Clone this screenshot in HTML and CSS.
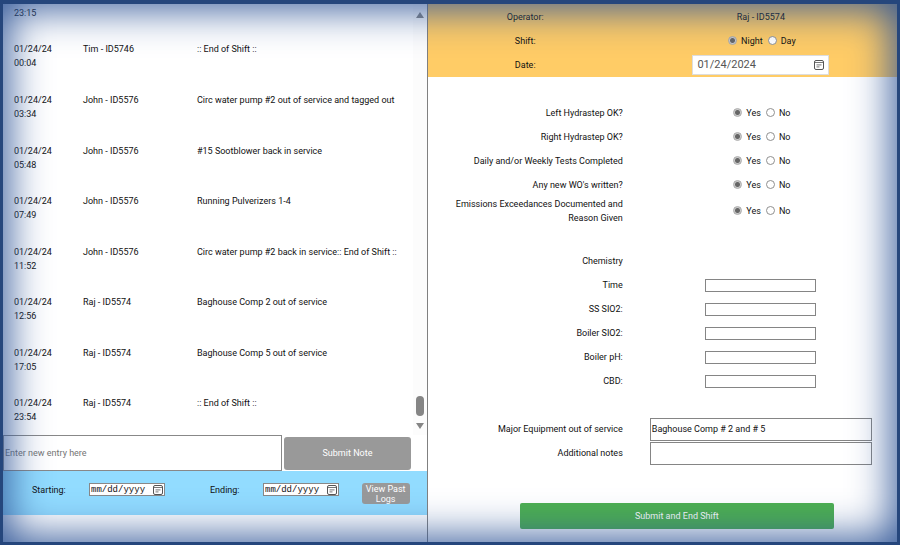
FILE: index.html
```html
<!DOCTYPE html>
<html lang="en">
<head>
<meta charset="utf-8">
<meta name="viewport" content="width=device-width, initial-scale=1">
<title>Shift Log</title>
<link rel="stylesheet" href="styles.css">
</head>
<body>
<main class="frame">
  <section class="log-panel" aria-label="Shift log">
    <div class="log">
      <table class="log-table">
        <tbody>
          <tr class="row-cut row-first"><td class="when">23:15</td><td class="who"></td><td></td></tr>
          <tr><td class="when">01/24/24<br>00:04</td><td class="who">Tim - ID5746</td><td>:: End of Shift ::</td></tr>
          <tr><td class="when">01/24/24<br>03:34</td><td class="who">John - ID5576</td><td>Circ water pump #2 out of service and tagged out</td></tr>
          <tr><td class="when">01/24/24<br>05:48</td><td class="who">John - ID5576</td><td>#15 Sootblower back in service</td></tr>
          <tr><td class="when">01/24/24<br>07:49</td><td class="who">John - ID5576</td><td>Running Pulverizers 1-4</td></tr>
          <tr><td class="when">01/24/24<br>11:52</td><td class="who">John - ID5576</td><td>Circ water pump #2 back in service:: End of Shift ::</td></tr>
          <tr><td class="when">01/24/24<br>12:56</td><td class="who">Raj - ID5574</td><td>Baghouse Comp 2 out of service</td></tr>
          <tr><td class="when">01/24/24<br>17:05</td><td class="who">Raj - ID5574</td><td>Baghouse Comp 5 out of service</td></tr>
          <tr class="row-cut"><td class="when">01/24/24<br>23:54</td><td class="who">Raj - ID5574</td><td>:: End of Shift ::</td></tr>
        </tbody>
      </table>
      <div class="scrollbar" aria-hidden="true">
        <svg class="arrow" viewBox="0 0 10 8"><path d="M5 1 9 7H1Z"/></svg>
        <span class="thumb"></span>
        <svg class="arrow" viewBox="0 0 10 8"><path d="M5 7 1 1H9Z"/></svg>
      </div>
    </div>
    <form class="entry">
      <input class="entry-text" type="text" placeholder="Enter new entry here" aria-label="Enter new entry here">
      <button class="btn-grey btn-note" type="button">Submit Note</button>
    </form>
    <form class="past">
      <label class="past-label" for="starting">Starting:</label>
      <input class="past-date" type="date" id="starting">
      <label class="past-label" for="ending">Ending:</label>
      <input class="past-date" type="date" id="ending">
      <button class="btn-grey btn-past" type="button">View Past Logs</button>
    </form>
    <div class="log-foot"></div>
  </section>

  <form class="shift-panel">
    <div class="shift-head">
      <div class="row row-head"><span>Operator:</span><span class="value">Raj - ID5574</span></div>
      <div class="row row-head"><span>Shift:</span>
        <div class="radios">
          <input type="radio" name="shift" id="night" checked><label for="night">Night</label>
          <input type="radio" name="shift" id="day"><label for="day">Day</label>
        </div>
      </div>
      <div class="row row-head"><label for="date">Date:</label><div class="value"><input class="shift-date" type="date" id="date" value="2024-01-24"></div></div>
    </div>

    <div class="group">
      <div class="row"><span>Left Hydrastep OK?</span>
        <div class="radios"><input type="radio" name="left" id="left-y" checked><label for="left-y">Yes</label><input type="radio" name="left" id="left-n"><label for="left-n">No</label></div></div>
      <div class="row"><span>Right Hydrastep OK?</span>
        <div class="radios"><input type="radio" name="right" id="right-y" checked><label for="right-y">Yes</label><input type="radio" name="right" id="right-n"><label for="right-n">No</label></div></div>
      <div class="row"><span>Daily and/or Weekly Tests Completed</span>
        <div class="radios"><input type="radio" name="tests" id="tests-y" checked><label for="tests-y">Yes</label><input type="radio" name="tests" id="tests-n"><label for="tests-n">No</label></div></div>
      <div class="row"><span>Any new WO's written?</span>
        <div class="radios"><input type="radio" name="wo" id="wo-y" checked><label for="wo-y">Yes</label><input type="radio" name="wo" id="wo-n"><label for="wo-n">No</label></div></div>
      <div class="row"><span>Emissions Exceedances Documented and Reason Given</span>
        <div class="radios"><input type="radio" name="emis" id="emis-y" checked><label for="emis-y">Yes</label><input type="radio" name="emis" id="emis-n"><label for="emis-n">No</label></div></div>
    </div>

    <div class="group">
      <div class="row"><span>Chemistry</span></div>
      <div class="row"><label for="time">Time</label><input class="reading" type="text" id="time"></div>
      <div class="row"><label for="ss">SS SIO2:</label><input class="reading" type="text" id="ss"></div>
      <div class="row"><label for="bsio">Boiler SIO2:</label><input class="reading" type="text" id="bsio"></div>
      <div class="row"><label for="bph">Boiler pH:</label><input class="reading" type="text" id="bph"></div>
      <div class="row"><label for="cbd">CBD:</label><input class="reading" type="text" id="cbd"></div>
    </div>

    <div class="group">
      <div class="row"><label for="major">Major Equipment out of service</label><input class="note" type="text" id="major" value="Baghouse Comp # 2 and # 5"></div>
      <div class="row"><label for="notes">Additional notes</label><input class="note" type="text" id="notes"></div>
    </div>

    <button class="btn-end" type="button">Submit and End Shift</button>
  </form>
</main>
</body>
</html>
```

FILE: styles.css
```css
* { box-sizing: border-box; }

body {
  margin: 0;
  font-family: Roboto, "Liberation Sans", sans-serif;
  font-size: 9px;
  line-height: 14px;
  color: #111;
  background: #fff;
}

input, button { font: inherit; color: inherit; margin: 0; }

.frame {
  position: relative;
  display: grid;
  grid-template-columns: 19fr 21fr;
  min-height: 100vh;
  border: 3px solid #25467c;
  border-top-width: 4px;
}

/* soft blue glow along the inside of the frame */
.frame::after {
  content: "";
  position: absolute;
  inset: 0;
  box-shadow: inset 0 0 42px 4px #2f5597;
  pointer-events: none;
}

/* Log */
.log-panel {
  display: flex;
  flex-direction: column;
  border-right: 1px solid #808080;
}

.log { flex: 1; display: flex; }

.log-table {
  flex: 1;
  border-collapse: collapse;
  table-layout: fixed;
}

.log-table tr { height: 50px; }
.log-table .row-cut { height: 38px; }
.log-table td { padding: 0; vertical-align: top; }
.log-table .row-first td { padding-top: 2px; }
.log-table .when { width: 80px; padding-left: 11px; }
.log-table .who { width: 114px; }

.scrollbar {
  width: 14px;
  padding: 7px 0 1px;
  display: flex;
  flex-direction: column;
  align-items: center;
  background: #fcfcfc;
}

.arrow { width: 10px; height: 8px; fill: #858585; }
.thumb { width: 8px; height: 20px; margin: auto 0 6px; border-radius: 4px; background: #858585; }
.thumb + .arrow { margin-bottom: 4px; }

.entry { display: flex; align-items: center; gap: 2px; padding-right: 16px; }

.entry-text {
  flex: 1;
  min-width: 0;
  height: 36px;
  padding: 0 1px;
  border: 1px solid #888;
  background: #fff;
}

.entry-text::placeholder { color: #757575; }

.btn-grey {
  border: 0;
  border-radius: 3px;
  background: #999;
  color: #fff;
}

.btn-note { width: 31%; height: 33px; }

.past {
  display: flex;
  align-items: flex-start;
  height: 44px;
  padding: 12px 17px 0 29px;
  background: #92dcff;
}

.past-label { width: 57px; }
.past-date + .past-label { margin-left: 45px; width: 53px; }

.past-date {
  width: 76px;
  height: 13px;
  padding: 0 1px;
  border: 1px solid #888;
  border-radius: 0;
  background: #fff;
  font-family: "Liberation Mono", monospace;
  line-height: 10px;
}

.btn-past { width: 48px; margin-left: auto; padding: 0 2px; height: 21px; line-height: 10px; }

.log-foot { height: 27px; }

/* Shift form */
.shift-panel { min-width: 0; }

.shift-head { padding-top: 1px; background: #ffcc66; }

.row {
  display: grid;
  grid-template-columns: 195fr 222fr;
  column-gap: 27px;
  align-items: center;
  justify-items: center;
  min-height: 24px;
  margin-right: 25px;
  text-align: right;
}

.row > :first-child { justify-self: end; }
.row-head > :first-child { justify-self: center; }

.group { margin-top: 24px; }

.radios { display: flex; align-items: center; gap: 4px; padding-left: 2px; }
.radios label + input { margin-left: 1px; }

input[type="radio"] {
  appearance: none;
  width: 9px;
  height: 9px;
  margin-bottom: 2px;
  border: 1px solid #909090;
  border-radius: 50%;
  background: #fff;
}

input[type="radio"]:checked {
  border-color: #aaa;
  background: radial-gradient(circle, #666 0 2px, #ccc 3px);
}

.shift-date {
  width: 137px;
  height: 20px;
  padding: 0 4px;
  border: 1px solid #ddd;
  background: #fff;
  color: #555;
  font-size: 11px;
}

input::-webkit-datetime-edit-month-field,
input::-webkit-datetime-edit-day-field,
input::-webkit-datetime-edit-year-field { padding: 0; }

input[type="date"]::-webkit-calendar-picker-indicator {
  width: 10px;
  height: 10px;
  padding: 0;
  margin: 0 0 0 auto;
  background: url("data:image/svg+xml,%3Csvg xmlns='http://www.w3.org/2000/svg' viewBox='0 0 10 10' fill='none' stroke='%23555'%3E%3Crect x='.5' y='.5' width='9' height='9' rx='1.5'/%3E%3Cpath d='M1 2.5h8M2.5 4.9h5M2.5 6.9h3' stroke-width='.8'/%3E%3C/svg%3E") center / contain no-repeat;
}

.past-date::-webkit-calendar-picker-indicator { width: 8px; height: 8px; }

.reading { width: 50%; height: 13px; padding: 0 2px; border: 1px solid #858585; background: #fff; }

.note { width: 100%; height: 23px; padding: 0 1px; border: 1px solid #858585; background: #fff; }

.btn-end {
  display: block;
  width: 67%;
  height: 26px;
  margin: 38px 0 12px 92px;
  border: 0;
  border-radius: 2px;
  background: #4caf50;
  color: #fff;
}
```
